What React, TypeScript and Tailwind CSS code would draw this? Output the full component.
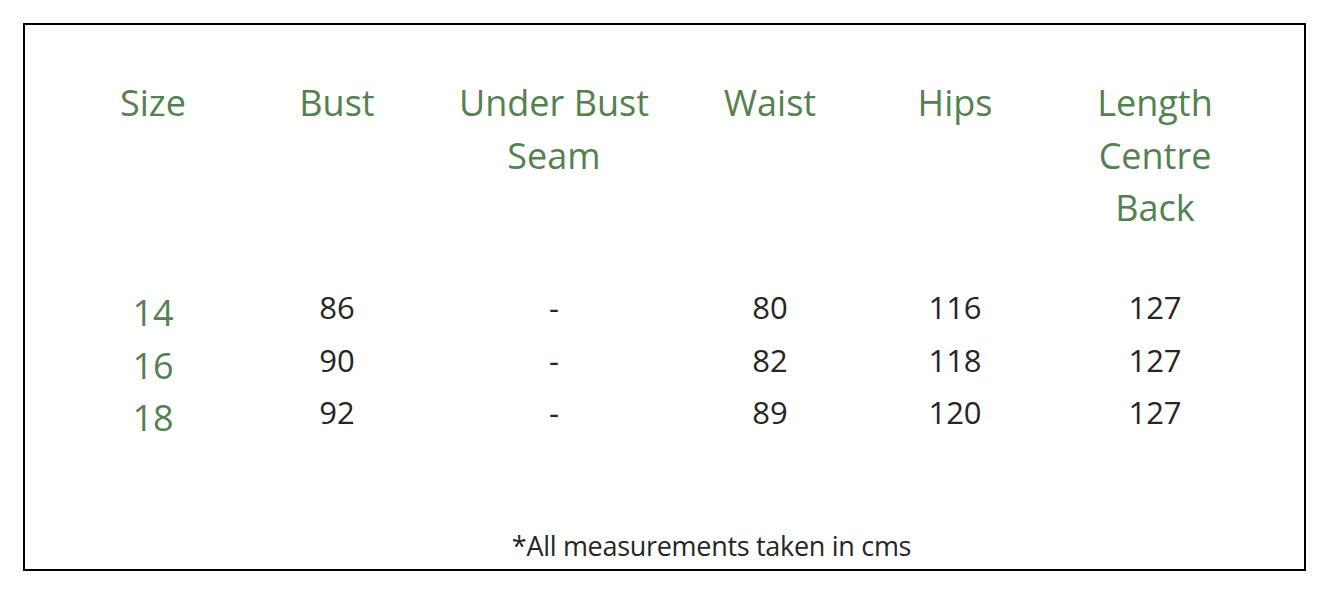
import React from "react"

const headers = [["Size"], ["Bust"], ["Under Bust", "Seam"], ["Waist"], ["Hips"], ["Length", "Centre", "Back"]]

const rows = [
  ["14", "86", "-", "80", "116", "127"],
  ["16", "90", "-", "82", "118", "127"],
  ["18", "92", "-", "89", "120", "127"],
]

const grid = "grid grid-cols-[184px_184px_250px_182px_188px_212px] pl-[36px]"

export default function App() {
  return (
    <div className="min-h-screen bg-white pt-[23px] pl-[23px]" style={{ fontFamily: "'Open Sans', sans-serif" }}>
      <div className="w-[1283px] h-[548px] border-2 border-black flex flex-col">
        {/* Cabecera */}
        <div className={`${grid} pt-[52px] h-[209px] items-start`}>
          {headers.map((h, i) => (
            <div key={i} className="text-center text-[36px] leading-[52.5px] text-[#548150]">
              {h.map(l => <div key={l}>{l}</div>)}
            </div>
          ))}
        </div>

        {/* Medidas */}
        <div className="mt-[47px]">
          {rows.map(r => (
            <div key={r[0]} className={`${grid} h-[52.5px]`}>
              {r.map((v, i) =>
                i === 0 ? (
                  <div key={i} className="text-center text-[36px] leading-[52.5px] pt-[6px] text-[#548150]">{v}</div>
                ) : (
                  <div key={i} className="text-center text-[31px] leading-[52.5px] text-[#262626]">{v}</div>
                )
              )}
            </div>
          ))}
        </div>

        <p className="mt-auto pb-[5px] pl-[94px] text-center text-[27px] leading-[36px] tracking-[-0.3px] text-[#262626]">
          *All measurements taken in cms
        </p>
      </div>
    </div>
  )
}
